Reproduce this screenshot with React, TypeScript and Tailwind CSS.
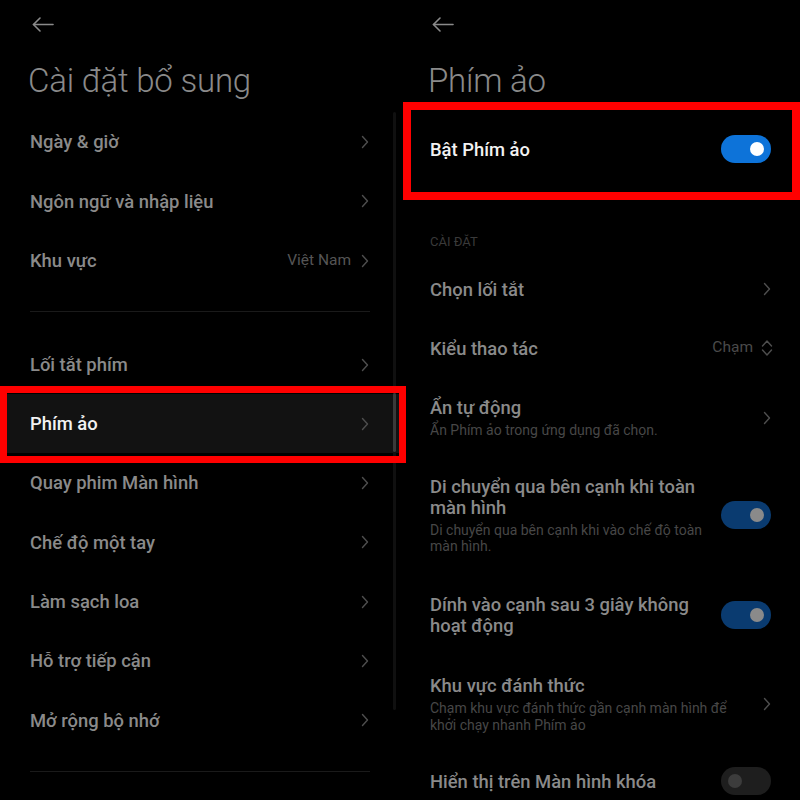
import * as React from 'react';

const BackArrow = () => (
    <svg width="22" height="15" viewBox="0 0 22 15" fill="none" stroke="#8a8a8a" strokeWidth={1.6} strokeLinecap="round" strokeLinejoin="round">
        <path d="M21 7.5H1.5" />
        <path d="M8 1L1.5 7.5L8 14" />
    </svg>
);

const Chevron = () => (
    <svg width="8" height="14" viewBox="0 0 8 14" fill="none" stroke="#4e4e4e" strokeWidth={1.4} strokeLinecap="round" strokeLinejoin="round">
        <path d="M1.5 1.5L6.5 7L1.5 12.5" />
    </svg>
);

const UpDown = () => (
    <svg width="12" height="18" viewBox="0 0 12 18" fill="none" stroke="#4e4e4e" strokeWidth={1.4} strokeLinecap="round" strokeLinejoin="round">
        <path d="M1.5 7L6 2L10.5 7" />
        <path d="M1.5 11L6 16L10.5 11" />
    </svg>
);

const Toggle = ({ state }: { state: 'on' | 'dim' | 'off' }) => {
    const track = state === 'on' ? 'bg-[#0d73d9]' : state === 'dim' ? 'bg-[#0a3b70]' : 'bg-[#1e1e1e]';
    const knob = state === 'on' ? 'bg-white' : state === 'dim' ? 'bg-[#8a8a8a]' : 'bg-[#3c3c3c]';
    return (
        <div className={`w-[50px] h-[28px] rounded-full flex items-center px-[7px] shrink-0 ${track} ${state === 'off' ? 'justify-start' : 'justify-end'}`}>
            <div className={`w-[14px] h-[14px] rounded-full ${knob}`} />
        </div>
    );
};

const Header = ({ title }: { title: string }) => (
    <div className="flex flex-col shrink-0">
        <div className="h-[48px] flex items-center pl-[32px]">
            <BackArrow />
        </div>
        <div className="h-[64.5px] flex items-center pl-[28px]">
            <span className="text-[33px] font-light text-[#8a8a8a] tracking-[-0.2px]">{title}</span>
        </div>
    </div>
);

const LeftRow = ({ label, value, active }: { label: string; value?: string; active?: boolean }) => (
    <div className={`h-[59.3px] shrink-0 flex items-center pl-[30px] pr-[31px] ${active ? 'bg-[#121212]' : ''}`}>
        <span className={`flex-1 text-[18.4px] font-medium ${active ? 'text-[#f2f2f2]' : 'text-[#8a8a8a]'}`}>{label}</span>
        {value && <span className="text-[15.5px] text-[#555555] mr-[10px]">{value}</span>}
        <Chevron />
    </div>
);

const Divider = () => (
    <div className="h-[44.5px] shrink-0 flex items-center px-[30px]">
        <div className="h-px w-full bg-[#1a1a1a] mt-[-2px]" />
    </div>
);

const RightRow = ({
    title,
    sub,
    height,
    right,
    textWidth,
}: {
    title: React.ReactNode;
    sub?: React.ReactNode;
    height: string;
    right: React.ReactNode;
    textWidth: string;
}) => (
    <div className={`${height} shrink-0 flex items-center pl-[30px] pr-[29px]`}>
        <div className="flex-1 flex flex-col">
            <div className={`${textWidth} text-[18.4px] font-medium text-[#8a8a8a] leading-[21px]`}>{title}</div>
            {sub && <div className={`${textWidth} text-[14px] text-[#474747] leading-[16.5px] mt-[4px]`}>{sub}</div>}
        </div>
        {right}
    </div>
);

export default function App() {
    return (
        <div className="relative w-[800px] h-[800px] bg-black flex overflow-hidden font-['Roboto',sans-serif]">
            {/* Left panel */}
            <div className="relative w-[400px] h-full flex flex-col">
                <Header title="Cài đặt bổ sung" />
                <LeftRow label="Ngày & giờ" />
                <LeftRow label="Ngôn ngữ và nhập liệu" />
                <LeftRow label="Khu vực" value="Việt Nam" />
                <Divider />
                <LeftRow label="Lối tắt phím" />
                <LeftRow label="Phím ảo" active />
                <LeftRow label="Quay phim Màn hình" />
                <LeftRow label="Chế độ một tay" />
                <LeftRow label="Làm sạch loa" />
                <LeftRow label="Hỗ trợ tiếp cận" />
                <LeftRow label="Mở rộng bộ nhớ" />
                <Divider />

                {/* scrollbar */}
                <div className="absolute left-[393px] top-[112px] w-[3px] h-[598px] bg-[#101010] rounded-full">
                    <div className="absolute left-0 top-[281px] w-[3px] h-[59px] bg-[#3a3a3a] rounded-full" />
                </div>
            </div>

            {/* Right panel */}
            <div className="w-[400px] h-full flex flex-col">
                <Header title="Phím ảo" />
                <div className="h-[73px] shrink-0 flex items-center pl-[30px] pr-[29px]">
                    <span className="flex-1 text-[18.4px] font-medium text-[#f2f2f2] mt-[2px]">Bật Phím ảo</span>
                    <Toggle state="on" />
                </div>
                <div className="h-[74px] shrink-0 flex items-end pl-[30px] pb-[8px]">
                    <span className="text-[13px] text-[#3a3a3a]">CÀI ĐẶT</span>
                </div>
                <RightRow height="h-[59px]" title="Chọn lối tắt" right={<Chevron />} textWidth="" />
                <RightRow
                    height="h-[59px]"
                    title="Kiểu thao tác"
                    textWidth=""
                    right={
                        <div className="flex items-center gap-[8px] mr-[-2px]">
                            <span className="text-[15.5px] text-[#4a4a4a]">Chạm</span>
                            <UpDown />
                        </div>
                    }
                />
                <RightRow
                    height="h-[80px]"
                    title="Ẩn tự động"
                    sub="Ẩn Phím ảo trong ứng dụng đã chọn."
                    textWidth=""
                    right={<Chevron />}
                />
                <RightRow
                    height="h-[115px]"
                    title="Di chuyển qua bên cạnh khi toàn màn hình"
                    sub="Di chuyển qua bên cạnh khi vào chế độ toàn màn hình."
                    textWidth="w-[282px]"
                    right={<Toggle state="dim" />}
                />
                <RightRow
                    height="h-[84px]"
                    title="Dính vào cạnh sau 3 giây không hoạt động"
                    textWidth="w-[282px]"
                    right={<Toggle state="dim" />}
                />
                <RightRow
                    height="h-[95px]"
                    title="Khu vực đánh thức"
                    sub="Chạm khu vực đánh thức gần cạnh màn hình để khởi chạy nhanh Phím ảo"
                    textWidth="w-[315px]"
                    right={<Chevron />}
                />
                <RightRow height="h-[59px]" title="Hiển thị trên Màn hình khóa" textWidth="" right={<Toggle state="off" />} />
            </div>

            {/* Red highlight boxes */}
            <div className="absolute left-0 top-[386px] w-[406px] h-[77px] border-[7px] border-[#ff0000] pointer-events-none" />
            <div className="absolute left-[403px] top-[102px] w-[397px] h-[98px] border-[8px] border-[#ff0000] pointer-events-none" />
        </div>
    );
}
